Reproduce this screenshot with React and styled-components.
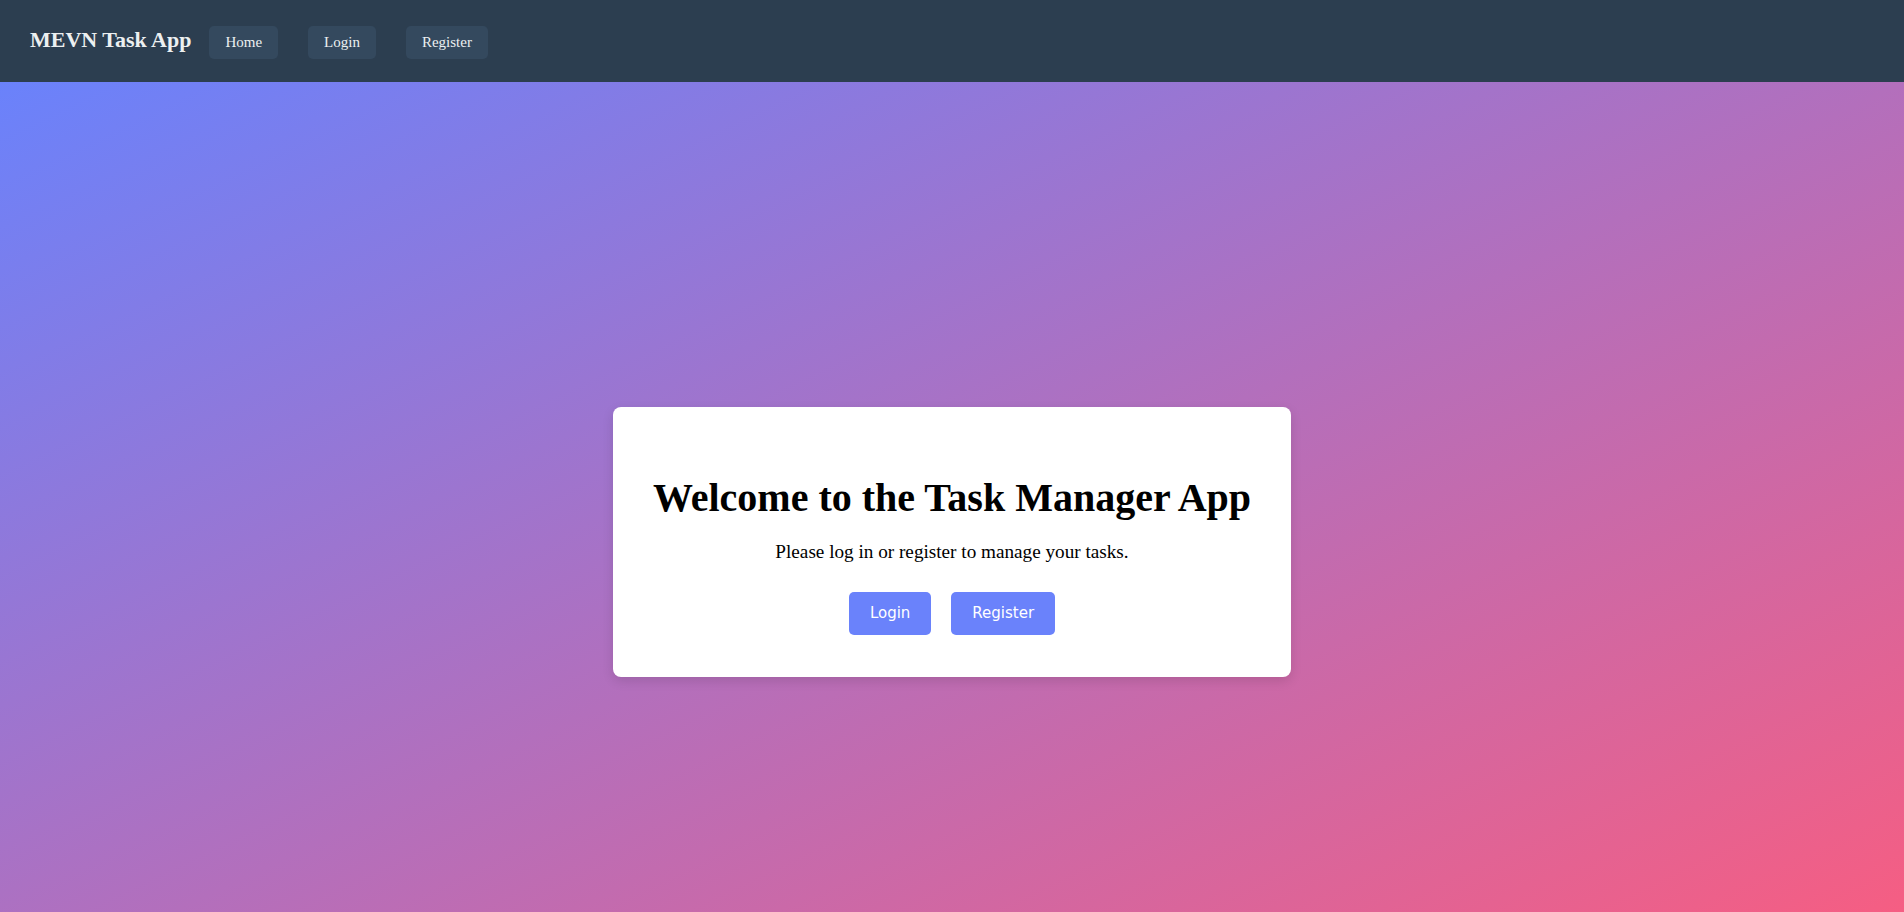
import React from "react";
import styled, { createGlobalStyle } from "styled-components";

const GlobalStyle = createGlobalStyle`
  body {
    margin: 0;
    font-family: "Liberation Serif", "Times New Roman", serif;
  }
`;

const Navbar = styled.nav`
  display: flex;
  align-items: baseline;
  box-sizing: border-box;
  height: 82px;
  padding: 26px 30px 0;
  background: #2c3e50;
`;

const Brand = styled.span`
  font-size: 22px;
  font-weight: bold;
  color: #ecf0f1;
  margin-right: 18px;
`;

const NavLinks = styled.div`
  display: flex;
  align-items: baseline;
  gap: 30px;
`;

const NavLink = styled.a`
  display: inline-block;
  padding: 8px 16px;
  font-size: 15px;
  color: #ecf0f1;
  background: #34495e;
  border-radius: 5px;
  text-decoration: none;
  cursor: pointer;
`;

const Main = styled.main`
  display: flex;
  justify-content: center;
  align-items: center;
  min-height: 100vh;
  background: linear-gradient(to bottom right, #6a82fb, #fc5c7d);
`;

const Card = styled.div`
  margin-top: 7px;
  padding: 40px 40px 42px;
  background: #ffffff;
  border-radius: 8px;
  box-shadow: 0 4px 12px rgba(0, 0, 0, 0.12);
  text-align: center;
`;

const Title = styled.h1`
  font-size: 40px;
  margin: 27px 0 20px;
  color: #000;
`;

const Lead = styled.p`
  font-size: 19.2px;
  margin: 0 0 29px;
  color: #000;
`;

const Actions = styled.div`
  display: flex;
  justify-content: center;
  gap: 20px;
`;

const ActionButton = styled.button`
  padding: 0 21px;
  height: 43px;
  font-family: "DejaVu Sans", Verdana, sans-serif;
  font-size: 15px;
  color: #ffffff;
  background: #6a82fb;
  border: none;
  border-radius: 5px;
  cursor: pointer;
`;

export default function App() {
  return (
    <>
      <GlobalStyle />
      <Navbar>
        <Brand>MEVN Task App</Brand>
        <NavLinks>
          <NavLink>Home</NavLink>
          <NavLink>Login</NavLink>
          <NavLink>Register</NavLink>
        </NavLinks>
      </Navbar>
      <Main>
        <Card>
          <Title>Welcome to the Task Manager App</Title>
          <Lead>Please log in or register to manage your tasks.</Lead>
          <Actions>
            <ActionButton>Login</ActionButton>
            <ActionButton>Register</ActionButton>
          </Actions>
        </Card>
      </Main>
    </>
  );
}
